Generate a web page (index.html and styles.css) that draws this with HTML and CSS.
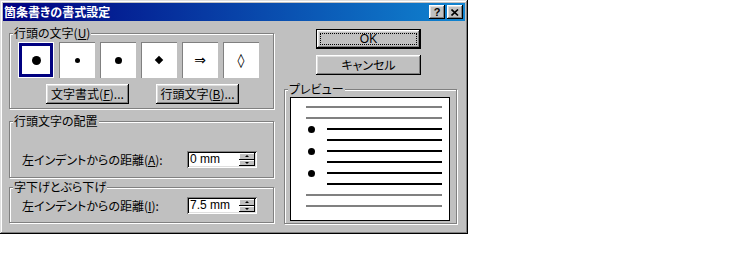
FILE: index.html
```html
<!DOCTYPE html>
<html lang="ja">
<head>
    <meta charset="UTF-8">
    <title>箇条書きの書式設定</title>
    <link rel="stylesheet" href="styles.css">
</head>
<body>
    <div class="dialog">
        <div class="titlebar">
            <span class="title">箇条書きの書式設定</span>
            <div class="title-btns">
                <span class="tbtn">?</span>
                <span class="tbtn">
                    <svg width="8" height="7" viewBox="0 0 8 7"><path d="M0.5 0.5 L7 6.5 M7 0.5 L0.5 6.5" stroke="#000" stroke-width="1.6"/></svg>
                </span>
            </div>
        </div>

        <div class="content">
            <div class="left">
                <div class="group g-bullets">
                    <span class="group-label">行頭の文字(<u>U</u>)</span>
                    <div class="bullets">
                        <div class="bullet-box selected"><span class="dot dot-lg"></span></div>
                        <div class="bullet-box"><span class="dot dot-sm"></span></div>
                        <div class="bullet-box"><span class="dot dot-md"></span></div>
                        <div class="bullet-box"><span class="diamond"></span></div>
                        <div class="bullet-box"><span class="glyph">⇒</span></div>
                        <div class="bullet-box"><span class="glyph">◊</span></div>
                    </div>
                    <div class="bullet-btns">
                        <button class="btn btn-char">文字書式(<u>F</u>)...</button>
                        <button class="btn btn-char">行頭文字(<u>B</u>)...</button>
                    </div>
                </div>

                <div class="group g-position">
                    <span class="group-label">行頭文字の配置</span>
                    <div class="field-row">
                        <span class="field-label">左インデントからの距離(<u>A</u>):</span>
                        <div class="spin">
                            <span class="spin-value">0 mm</span>
                            <div class="spin-btns">
                                <span class="spin-btn"><span class="arrow-up"></span></span>
                                <span class="spin-btn"><span class="arrow-down"></span></span>
                            </div>
                        </div>
                    </div>
                </div>

                <div class="group g-indent">
                    <span class="group-label">字下げとぶら下げ</span>
                    <div class="field-row">
                        <span class="field-label">左インデントからの距離(<u>I</u>):</span>
                        <div class="spin">
                            <span class="spin-value">7.5 mm</span>
                            <div class="spin-btns">
                                <span class="spin-btn"><span class="arrow-up"></span></span>
                                <span class="spin-btn"><span class="arrow-down"></span></span>
                            </div>
                        </div>
                    </div>
                </div>
            </div>

            <div class="right">
                <button class="btn btn-main btn-default"><span class="focus">OK</span></button>
                <button class="btn btn-main">キャンセル</button>

                <div class="group g-preview">
                    <span class="group-label">プレビュー</span>
                    <div class="preview">
                        <div class="pv-line gray"></div>
                        <div class="pv-line gray"></div>
                        <div class="pv-row"><span class="pv-dot"></span><div class="pv-line"></div></div>
                        <div class="pv-row"><span class="pv-gap"></span><div class="pv-line"></div></div>
                        <div class="pv-row"><span class="pv-dot"></span><div class="pv-line"></div></div>
                        <div class="pv-row"><span class="pv-gap"></span><div class="pv-line"></div></div>
                        <div class="pv-row"><span class="pv-dot"></span><div class="pv-line"></div></div>
                        <div class="pv-row"><span class="pv-gap"></span><div class="pv-line"></div></div>
                        <div class="pv-line gray"></div>
                        <div class="pv-line gray"></div>
                    </div>
                </div>
            </div>
        </div>
    </div>
</body>
</html>
```

FILE: styles.css
```css
* {
    box-sizing: border-box;
}
body {
    margin: 0;
    background: #fff;
    font-family: "Noto Sans CJK JP", "DejaVu Sans", sans-serif;
    font-size: 12px;
    line-height: 14px;
    color: #000;
    font-feature-settings: "palt";
}
u {
    text-decoration: underline;
}

/* ダイアログ枠 */
.dialog {
    width: 468px;
    height: 234px;
    background: #c0c0c0;
    padding: 3px;
    display: flex;
    flex-direction: column;
    box-shadow: inset -1px -1px #000, inset 1px 1px #dfdfdf, inset -2px -2px #808080, inset 2px 2px #fff;
}
.titlebar {
    height: 18px;
    flex: none;
    background: linear-gradient(to right, #000080, #1084d0);
    color: #fff;
    display: flex;
    align-items: center;
    justify-content: space-between;
    padding: 0 2px 0 1px;
}
.title {
    font-weight: bold;
    line-height: 18px;
}
.title-btns {
    display: flex;
    gap: 2px;
}
.tbtn {
    width: 16px;
    height: 14px;
    background: #c0c0c0;
    color: #000;
    display: flex;
    align-items: center;
    justify-content: center;
    font: bold 11px/1 "Liberation Sans", sans-serif;
    box-shadow: inset -1px -1px #000, inset 1px 1px #fff, inset -2px -2px #808080, inset 2px 2px #dfdfdf;
}

.content {
    flex: 1;
    display: flex;
}

/* グループ枠 */
.group {
    position: relative;
    border: 1px solid #808080;
    box-shadow: inset 1px 1px #fff, 1px 1px #fff;
}
.group-label {
    position: absolute;
    top: -8px;
    left: 3px;
    padding: 0 1px;
    background: #c0c0c0;
    line-height: 14px;
    white-space: nowrap;
}

.left {
    width: 265px;
    margin-left: 6px;
    padding-top: 12px;
    display: flex;
    flex-direction: column;
}
.g-bullets {
    padding: 8px 8px 4px;
}
.bullets {
    display: flex;
    gap: 5px;
}
.bullet-box {
    width: 36px;
    height: 36px;
    background: #fff;
    display: flex;
    align-items: center;
    justify-content: center;
    box-shadow: inset 1px 1px #808080;
}
.bullet-box.selected {
    box-shadow: inset 0 0 0 1px #fff, inset 0 0 0 4px #000080;
}
.dot {
    border-radius: 50%;
    background: #000;
}
.dot-lg {
    width: 9px;
    height: 9px;
}
.dot-sm {
    width: 5px;
    height: 5px;
}
.dot-md {
    width: 7px;
    height: 7px;
}
.diamond {
    width: 6px;
    height: 6px;
    background: #000;
    transform: rotate(45deg);
}
.glyph {
    font-family: "DejaVu Sans", sans-serif;
    font-size: 14px;
    line-height: 14px;
}
.bullet-btns {
    display: flex;
    justify-content: center;
    gap: 27px;
    margin-top: 6px;
    padding-left: 2px;
}

/* ボタン */
.btn {
    font: inherit;
    color: #000;
    background: #c0c0c0;
    border: 0;
    padding: 0;
    height: 20px;
    display: flex;
    align-items: center;
    justify-content: center;
    box-shadow: inset -1px -1px #000, inset 1px 1px #fff, inset -2px -2px #808080, inset 2px 2px #dfdfdf;
}
.btn-char {
    width: 83px;
}
.btn-main {
    width: 105px;
    margin-left: 32px;
}
.btn-default {
    margin-top: 8px;
    padding: 4px;
    box-shadow: inset 0 0 0 1px #000, inset -2px -2px #000, inset 2px 2px #fff, inset -3px -3px #808080, inset 3px 3px #dfdfdf;
}
.btn-default + .btn {
    margin-top: 6px;
}
.focus {
    flex: 1;
    align-self: stretch;
    display: flex;
    align-items: center;
    justify-content: center;
    border: 1px dotted #000;
    font-family: "Liberation Sans", sans-serif;
}

/* 距離入力 */
.g-position {
    margin-top: 12px;
    padding: 29px 8px 9px 12px;
}
.g-indent {
    margin-top: 9px;
    padding: 9px 8px 8px 12px;
}
.field-row {
    display: flex;
    align-items: center;
}
.field-label {
    width: 165px;
}
.spin {
    width: 70px;
    height: 17px;
    background: #fff;
    display: flex;
    padding: 2px;
    box-shadow: inset 1px 1px #808080, inset -1px -1px #fff, inset 2px 2px #000, inset -2px -2px #dfdfdf;
}
.spin-value {
    flex: 1;
    padding-left: 1px;
    font: 12px/13px "Liberation Sans", sans-serif;
}
.spin-btns {
    width: 16px;
    display: flex;
    flex-direction: column;
}
.spin-btn {
    flex: 1;
    background: #c0c0c0;
    display: flex;
    align-items: center;
    justify-content: center;
    box-shadow: inset -1px -1px #000, inset 1px 1px #fff;
}
.arrow-up {
    border-left: 2px solid transparent;
    border-right: 2px solid transparent;
    border-bottom: 2px solid #000;
}
.arrow-down {
    border-left: 2px solid transparent;
    border-right: 2px solid transparent;
    border-top: 2px solid #000;
}

/* プレビュー */
.right {
    width: 173px;
    margin-left: 10px;
    display: flex;
    flex-direction: column;
}
.g-preview {
    margin-top: 14px;
    padding: 7px 6px 2px 5px;
}
.preview {
    width: 160px;
    height: 124px;
    background: #fff;
    border: 1px solid #000;
    padding: 8px 7px 0 15px;
    display: flex;
    flex-direction: column;
    gap: 9px;
}
.pv-line {
    height: 2px;
    flex: 1;
    background: #000;
}
.preview > .pv-line {
    flex: none;
}
.pv-line.gray {
    background: #808080;
}
.pv-row {
    height: 2px;
    display: flex;
    align-items: center;
}
.pv-dot {
    width: 7px;
    height: 7px;
    margin: 0 12px 0 2px;
    border-radius: 50%;
    background: #000;
}
.pv-gap {
    width: 21px;
}
```
